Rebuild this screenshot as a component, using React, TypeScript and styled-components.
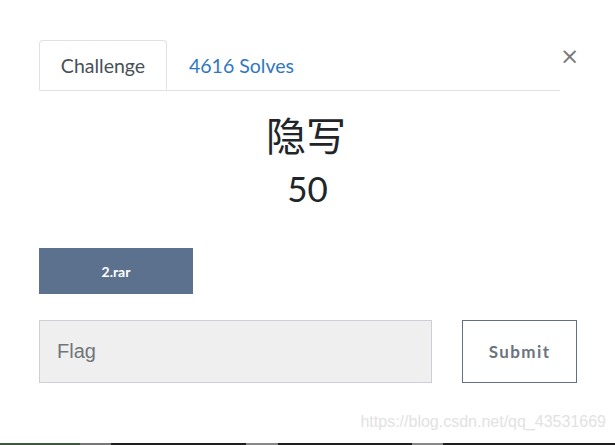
import React from 'react';
import styled, { createGlobalStyle } from 'styled-components';

const GlobalStyle = createGlobalStyle`
  html, body {
    margin: 0;
    padding: 0;
    background: #fff;
    font-family: Lato, "Liberation Sans", sans-serif;
  }
`;

const Page = styled.div`
  position: relative;
  width: 615px;
  height: 445px;
  overflow: hidden;
  background: #fff;
`;

const Modal = styled.div`
  padding: 40px 38px 0 39px;
  display: flex;
  flex-direction: column;
`;

const Header = styled.div`
  display: flex;
  align-items: flex-start;
`;

const Tabs = styled.div`
  flex: 0 0 521px;
  display: flex;
  border-bottom: 1px solid #dee2e6;
  height: 50px;
`;

const Tab = styled.div<{ active?: boolean }>`
  height: 50px;
  box-sizing: border-box;
  padding: 0 20px;
  display: flex;
  align-items: center;
  font-size: 19.5px;
  color: ${p => (p.active ? '#495057' : '#2f78bf')};
  background: #fff;
  border: 1px solid ${p => (p.active ? '#dee2e6' : 'transparent')};
  border-bottom-color: ${p => (p.active ? '#fff' : 'transparent')};
  border-radius: 4px 4px 0 0;
  margin-bottom: -1px;
  ${p => (p.active ? 'width: 128px; justify-content: center;' : 'padding-left: 21px;')}
`;

const Close = styled.div`
  flex: 1;
  text-align: center;
  font-family: "DejaVu Sans", sans-serif;
  font-size: 23px;
  line-height: 30px;
  margin-top: 1px;
  margin-left: 0;
  color: #7a7a7a;
`;

const Title = styled.div`
  margin-top: 20px;
  text-align: center;
  font-family: Lato, "Noto Sans CJK SC", sans-serif;
  font-size: 40px;
  line-height: 50px;
  color: #212529;
  padding-right: 4px;
`;

const Points = styled.div`
  margin-top: 6px;
  text-align: center;
  font-size: 35px;
  line-height: 42px;
  color: #212529;
  padding-right: 1px;
`;

const FileButton = styled.div`
  margin-top: 39px;
  width: 154px;
  height: 46px;
  background: #5b718e;
  color: #fff;
  font-weight: bold;
  font-size: 14px;
  display: flex;
  align-items: center;
  justify-content: center;
`;

const SubmitRow = styled.div`
  margin-top: 26px;
  display: flex;
  gap: 30px;
`;

const FlagInput = styled.div`
  width: 394px;
  height: 63px;
  box-sizing: border-box;
  background: #efefef;
  border: 1px solid #ccd0d6;
  display: flex;
  align-items: center;
  padding-left: 17px;
  font-family: "Liberation Sans", Arial, sans-serif;
  font-size: 20px;
  color: #70757b;
`;

const SubmitButton = styled.div`
  width: 115px;
  height: 63px;
  box-sizing: border-box;
  border: 1px solid #5f7087;
  display: flex;
  align-items: center;
  justify-content: center;
  font-weight: bold;
  font-size: 17px;
  letter-spacing: 1.4px;
  color: #6c747e;
`;

const Watermark = styled.div`
  position: absolute;
  right: 9px;
  top: 413px;
  font-family: "Liberation Sans", Arial, sans-serif;
  font-size: 16px;
  color: #e2e2e2;
`;

const BottomEdge = styled.div`
  position: absolute;
  left: 0;
  right: 0;
  bottom: 0;
  height: 2px;
  background: linear-gradient(
    to right,
    #3d5a3d 0, #3d5a3d 80px,
    #777 80px, #777 111px,
    #1e1e1e 111px, #1e1e1e 246px,
    #888 246px, #888 278px,
    #1e1e1e 278px, #1e1e1e 412px,
    #888 412px, #888 443px,
    #1e1e1e 443px
  );
`;

export default function App() {
  return (
    <Page>
      <GlobalStyle />
      <Modal>
        <Header>
          <Tabs>
            <Tab active>Challenge</Tab>
            <Tab>4616 Solves</Tab>
          </Tabs>
          <Close>×</Close>
        </Header>
        <Title>隐写</Title>
        <Points>50</Points>
        <FileButton>2.rar</FileButton>
        <SubmitRow>
          <FlagInput>Flag</FlagInput>
          <SubmitButton>Submit</SubmitButton>
        </SubmitRow>
      </Modal>
      <Watermark>https://blog.csdn.net/qq_43531669</Watermark>
      <BottomEdge />
    </Page>
  );
}
